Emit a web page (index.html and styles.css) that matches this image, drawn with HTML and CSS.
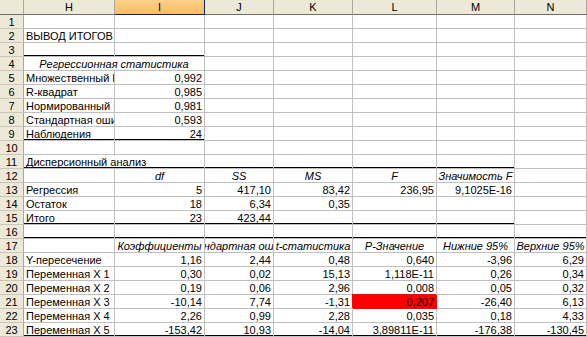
FILE: index.html
```html
<!DOCTYPE html>
<html lang="ru">
<head>
<meta charset="utf-8">
<title>Вывод итогов</title>
<link rel="stylesheet" href="styles.css">
</head>
<body>
<div class="sheet">
  <div class="hd corner"></div>
  <div class="hd">H</div>
  <div class="hd sel">I</div>
  <div class="hd">J</div>
  <div class="hd">K</div>
  <div class="hd">L</div>
  <div class="hd">M</div>
  <div class="hd">N</div>

  <div class="rh">1</div>
  <div class="c"></div><div class="c"></div><div class="c"></div><div class="c"></div><div class="c"></div><div class="c"></div><div class="c"></div>

  <div class="rh">2</div>
  <div class="c">ВЫВОД ИТОГОВ</div><div class="c"></div><div class="c"></div><div class="c"></div><div class="c"></div><div class="c"></div><div class="c"></div>

  <div class="rh">3</div>
  <div class="c tk"></div><div class="c tk"></div><div class="c"></div><div class="c"></div><div class="c"></div><div class="c"></div><div class="c"></div>

  <div class="rh">4</div>
  <div class="c s2 ctr it tn">Регрессионная статистика</div><div class="c"></div><div class="c"></div><div class="c"></div><div class="c"></div><div class="c"></div>

  <div class="rh">5</div>
  <div class="c">Множественный R</div><div class="c n">0,992</div><div class="c"></div><div class="c"></div><div class="c"></div><div class="c"></div><div class="c"></div>

  <div class="rh">6</div>
  <div class="c">R-квадрат</div><div class="c n">0,985</div><div class="c"></div><div class="c"></div><div class="c"></div><div class="c"></div><div class="c"></div>

  <div class="rh">7</div>
  <div class="c">Нормированный R-квадрат</div><div class="c n">0,981</div><div class="c"></div><div class="c"></div><div class="c"></div><div class="c"></div><div class="c"></div>

  <div class="rh">8</div>
  <div class="c">Стандартная ошибка</div><div class="c n">0,593</div><div class="c"></div><div class="c"></div><div class="c"></div><div class="c"></div><div class="c"></div>

  <div class="rh">9</div>
  <div class="c tk">Наблюдения</div><div class="c n tk">24</div><div class="c"></div><div class="c"></div><div class="c"></div><div class="c"></div><div class="c"></div>

  <div class="rh">10</div>
  <div class="c"></div><div class="c"></div><div class="c"></div><div class="c"></div><div class="c"></div><div class="c"></div><div class="c"></div>

  <div class="rh">11</div>
  <div class="c s2 tk">Дисперсионный анализ</div><div class="c tk"></div><div class="c tk"></div><div class="c tk"></div><div class="c tk"></div><div class="c"></div>

  <div class="rh">12</div>
  <div class="c tn"></div><div class="c ctr it tn">df</div><div class="c ctr it tn">SS</div><div class="c ctr it tn">MS</div><div class="c ctr it tn">F</div><div class="c ctr it tn">Значимость F</div><div class="c"></div>

  <div class="rh">13</div>
  <div class="c">Регрессия</div><div class="c n">5</div><div class="c n">417,10</div><div class="c n">83,42</div><div class="c n">236,95</div><div class="c n">9,1025E-16</div><div class="c"></div>

  <div class="rh">14</div>
  <div class="c">Остаток</div><div class="c n">18</div><div class="c n">6,34</div><div class="c n">0,35</div><div class="c"></div><div class="c"></div><div class="c"></div>

  <div class="rh">15</div>
  <div class="c tk">Итого</div><div class="c n tk">23</div><div class="c n tk">423,44</div><div class="c tk"></div><div class="c tk"></div><div class="c tk"></div><div class="c"></div>

  <div class="rh">16</div>
  <div class="c tk"></div><div class="c tk"></div><div class="c tk"></div><div class="c tk"></div><div class="c tk"></div><div class="c tk"></div><div class="c tk"></div>

  <div class="rh">17</div>
  <div class="c tn"></div><div class="c ctr it tn">Коэффициенты</div><div class="c ctr it tn">Стандартная ошибка</div><div class="c ctr it tn">t-статистика</div><div class="c ctr it tn">P-Значение</div><div class="c ctr it tn">Нижние 95%</div><div class="c ctr it tn">Верхние 95%</div>

  <div class="rh">18</div>
  <div class="c">Y-пересечение</div><div class="c n">1,16</div><div class="c n">2,44</div><div class="c n">0,48</div><div class="c n">0,640</div><div class="c n">-3,96</div><div class="c n">6,29</div>

  <div class="rh">19</div>
  <div class="c">Переменная X 1</div><div class="c n">0,30</div><div class="c n">0,02</div><div class="c n">15,13</div><div class="c n">1,118E-11</div><div class="c n">0,26</div><div class="c n">0,34</div>

  <div class="rh">20</div>
  <div class="c">Переменная X 2</div><div class="c n">0,19</div><div class="c n">0,06</div><div class="c n">2,96</div><div class="c n">0,008</div><div class="c n">0,05</div><div class="c n">0,32</div>

  <div class="rh">21</div>
  <div class="c">Переменная X 3</div><div class="c n">-10,14</div><div class="c n">7,74</div><div class="c n">-1,31</div><div class="c n red">0,207</div><div class="c n">-26,40</div><div class="c n">6,13</div>

  <div class="rh">22</div>
  <div class="c">Переменная X 4</div><div class="c n">2,26</div><div class="c n">0,99</div><div class="c n">2,28</div><div class="c n">0,035</div><div class="c n">0,18</div><div class="c n">4,33</div>

  <div class="rh">23</div>
  <div class="c tk">Переменная X 5</div><div class="c n tk">-153,42</div><div class="c n tk">10,93</div><div class="c n tk">-14,04</div><div class="c n tk">3,89811E-11</div><div class="c n tk">-176,38</div><div class="c n tk">-130,45</div>
</div>
</body>
</html>
```
FILE: styles.css
```css
html, body {
  margin: 0;
  padding: 0;
  background: #ffffff;
  overflow: hidden;
}

.sheet {
  display: grid;
  grid-template-columns: 24px 91px 90px 69px 79px 84px 78px 72px;
  grid-template-rows: 15px repeat(23, 14px);
  font-family: "Liberation Sans", Arial, sans-serif;
  font-size: 11px;
  color: #000000;
}

.hd {
  background: #ecE9d8;
  border-right: 1px solid #aca899;
  border-bottom: 1px solid #716f64;
  box-sizing: border-box;
  display: flex;
  align-items: flex-end;
  justify-content: center;
  line-height: 12px;
  padding-bottom: 1px;
}

.hd.sel {
  background: linear-gradient(#fcd08a, #f8bd62);
  border-right-color: #0a246a;
  border-bottom-color: #0a246a;
}

.rh {
  background: #ece9d8;
  border-right: 1px solid #aca899;
  border-bottom: 1px solid #cbc7b8;
  box-sizing: border-box;
  display: flex;
  align-items: flex-end;
  justify-content: center;
  line-height: 12px;
}

.c {
  position: relative;
  box-sizing: border-box;
  border-right: 1px solid #c0c0c0;
  border-bottom: 1px solid #c0c0c0;
  display: flex;
  align-items: flex-end;
  justify-content: flex-start;
  padding: 0 2px;
  line-height: 12px;
  white-space: nowrap;
  overflow: hidden;
}

.n { justify-content: flex-end; }
.ctr { justify-content: center; }
.it { font-style: italic; }
.s2 { grid-column: span 2; }

.tk::after,
.tn::after {
  content: "";
  position: absolute;
  left: 0;
  right: -1px;
  bottom: -1px;
  background: #000000;
}
.tk::after { height: 2px; }
.tn::after { height: 1px; }

.red {
  background: #ff0000;
  border-right-color: #ff0000;
  border-bottom-color: #ff0000;
  box-shadow: -1px -1px 0 #ff0000;
  overflow: visible;
}
```
